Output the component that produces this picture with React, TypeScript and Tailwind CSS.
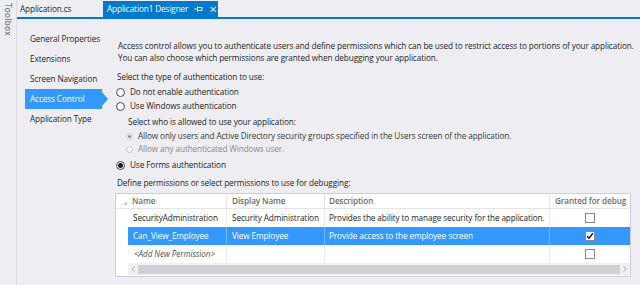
import React from 'react';

const navItems = ['General Properties', 'Extensions', 'Screen Navigation', 'Access Control', 'Application Type'];

const rows = [
  { name: 'SecurityAdministration', display: 'Security Administration', desc: 'Provides the ability to manage security for the application.', granted: false, selected: false },
  { name: 'Can_View_Employee', display: 'View Employee', desc: 'Provide access to the employee screen', granted: true, selected: true },
];

const Radio: React.FC<{ checked?: boolean }> = ({ checked }) => (
  <span className="w-[9px] h-[9px] rounded-full border border-[#4a4a4a] bg-white flex items-center justify-center shrink-0">
    {checked && <span className="w-[5px] h-[5px] rounded-full bg-[#1e1e1e]" />}
  </span>
);

const SmallRadio: React.FC<{ checked?: boolean }> = ({ checked }) => (
  <span className="w-[7px] h-[7px] rounded-full border border-[#c8c8cc] bg-[#f7f7f7] flex items-center justify-center shrink-0">
    {checked && <span className="w-[3px] h-[3px] rounded-full bg-[#8a8a8a]" />}
  </span>
);

const CheckBox: React.FC<{ checked?: boolean }> = ({ checked }) => (
  <span className="w-[10px] h-[10px] border border-[#8a8a8a] bg-white flex items-center justify-center">
    {checked && (
      <svg width="8" height="8" viewBox="0 0 8 8">
        <path d="M1 4.2 L3 6.3 L7 1.3" fill="none" stroke="#111" strokeWidth="1.4" />
      </svg>
    )}
  </span>
);

const PinIcon = () => (
  <svg width="9" height="8" viewBox="0 0 9 8">
    <path d="M0 4 H3 M3.5 1 V7" stroke="#cfe6f7" strokeWidth="1" />
    <rect x="3.5" y="2.5" width="4.5" height="3" fill="none" stroke="#cfe6f7" strokeWidth="1" />
  </svg>
);

export default function App() {
  return (
    <div className="w-[640px] h-[285px] bg-[#eeeef2] flex overflow-hidden whitespace-nowrap text-[8.2px] tracking-[-0.1px] text-[#1e1e1e] font-['Open_Sans',sans-serif]">
      {/* toolbox strip */}
      <div className="w-[17px] shrink-0 border-r border-[#dcdce2] pt-[3px] flex justify-center">
        <span className="[writing-mode:vertical-rl] text-[#555] tracking-[0.3px]">Toolbox</span>
      </div>

      <div className="flex-1 flex flex-col">
        {/* tabs */}
        <div className="h-[17px] flex items-end">
          <div className="w-[86px] h-[16px] pl-[3px] flex items-center">Application.cs</div>
          <div className="w-[115px] h-[16px] bg-[#007acc] text-white pl-[4px] flex items-center">
            <span>Application1 Designer</span>
            <span className="ml-[6px] flex items-center"><PinIcon /></span>
            <span className="ml-[6px] text-[10px] leading-none text-[#d6ebfa]">✕</span>
          </div>
        </div>
        <div className="h-[2px] bg-[#007acc]" />

        <div className="flex-1 flex">
          {/* left navigation */}
          <div className="w-[99px] shrink-0 pt-[10px]">
            {navItems.map(item => (
              <div key={item} className="h-[20px] flex items-center pl-[8px]">
                {item === 'Access Control' ? (
                  <>
                    <div className="w-[77px] h-[20px] bg-[#3399ff] text-white flex items-center pl-[5px]">{item}</div>
                    <div className="w-0 h-0 border-y-[7px] border-y-transparent border-l-[6px] border-l-[#3399ff]" />
                  </>
                ) : (
                  <span className="pl-[5px]">{item}</span>
                )}
              </div>
            ))}
          </div>

          {/* content */}
          <div className="flex-1 pt-[21px] flex flex-col">
            <p className="leading-[12px] pl-[2px]">
              Access control allows you to authenticate users and define permissions which can be used to restrict access to portions of your application.
              <br />
              You can also choose which permissions are granted when debugging your application.
            </p>

            <div className="mt-[7px] h-[12px] flex items-center pl-[1px]">Select the type of authentication to use:</div>
            <div className="mt-[2px] h-[14px] flex items-center gap-[5px]"><Radio /><span>Do not enable authentication</span></div>
            <div className="h-[14px] flex items-center gap-[5px]"><Radio /><span>Use Windows authentication</span></div>
            <div className="mt-[3px] h-[12px] flex items-center pl-[12px]">Select who is allowed to use your application:</div>
            <div className="mt-[1px] h-[14px] flex items-center pl-[10px] gap-[5px]">
              <SmallRadio checked />
              <span className="text-[#3a3a3a]">Allow only users and Active Directory security groups specified in the Users screen of the application.</span>
            </div>
            <div className="h-[13px] flex items-center pl-[10px] gap-[5px]">
              <SmallRadio />
              <span className="text-[#8a8a8a]">Allow any authenticated Windows user.</span>
            </div>
            <div className="mt-[2px] h-[14px] flex items-center gap-[5px]"><Radio checked /><span>Use Forms authentication</span></div>
            <div className="mt-[5px] h-[12px] flex items-center pl-[1px]">Define permissions or select permissions to use for debugging:</div>

            {/* permissions grid */}
            <div className="mt-[4px] -ml-[1px] w-[516px] border border-[#cccedb] bg-white">
              <div className="grid grid-cols-[12px_98px_98px_225px_1fr] h-[15px] border-b border-[#e5e5e8] font-semibold text-[#6d6d70]">
                <div className="flex items-end justify-end pb-[3px] pr-[1px]">
                  <svg width="4" height="4" viewBox="0 0 4 4"><path d="M4 0 V4 H0 Z" fill="#c8c8cc" /></svg>
                </div>
                <div className="flex items-center pl-[4px]">Name</div>
                <div className="flex items-center pl-[5px] border-l border-[#e5e5e8]">Display Name</div>
                <div className="flex items-center pl-[4px] border-l border-[#e5e5e8]">Description</div>
                <div className="flex items-center pl-[5px] border-l border-[#e5e5e8]">Granted for debug</div>
              </div>

              {rows.map(r => (
                <div key={r.name} className="grid grid-cols-[12px_98px_98px_225px_1fr] h-[18px]">
                  <div />
                  <div className={`flex items-center pl-[5px] overflow-hidden ${r.selected ? 'bg-[#3399ff] text-white' : ''}`}>{r.name}</div>
                  <div className={`flex items-center pl-[5px] overflow-hidden border-l ${r.selected ? 'bg-[#3399ff] text-white border-[#7ab8f5]' : 'border-[#ececef]'}`}>{r.display}</div>
                  <div className={`flex items-center pl-[4px] overflow-hidden border-l ${r.selected ? 'bg-[#3399ff] text-white border-[#7ab8f5]' : 'border-[#ececef]'}`}>{r.desc}</div>
                  <div className={`flex items-center justify-center border-l ${r.selected ? 'bg-[#3399ff] border-[#7ab8f5]' : 'border-[#ececef]'}`}>
                    <CheckBox checked={r.granted} />
                  </div>
                </div>
              ))}

              <div className="grid grid-cols-[12px_98px_98px_225px_1fr] h-[18px]">
                <div />
                <div className="flex items-center pl-[6px] italic text-[#555]">&lt;Add New Permission&gt;</div>
                <div className="border-l border-[#ececef]" />
                <div className="border-l border-[#ececef]" />
                <div className="flex items-center justify-center border-l border-[#ececef]"><CheckBox /></div>
              </div>

              {/* horizontal scrollbar */}
              <div className="h-[13px] flex pb-[1px]">
                <div className="w-[12px]" />
                <div className="flex-1 bg-[#f0f0f2] flex items-center">
                  <span className="w-[10px] flex justify-center">
                    <svg width="4" height="6" viewBox="0 0 4 6"><path d="M3.5 0.5 L0.8 3 L3.5 5.5" fill="none" stroke="#a8a8ae" strokeWidth="1" /></svg>
                  </span>
                  <div className="flex-1 h-[9px] bg-[#d0d0d4]" />
                  <span className="w-[10px] flex justify-center">
                    <svg width="4" height="6" viewBox="0 0 4 6"><path d="M0.5 0.5 L3.2 3 L0.5 5.5" fill="none" stroke="#a8a8ae" strokeWidth="1" /></svg>
                  </span>
                </div>
              </div>
            </div>
          </div>
        </div>
      </div>
    </div>
  );
}
